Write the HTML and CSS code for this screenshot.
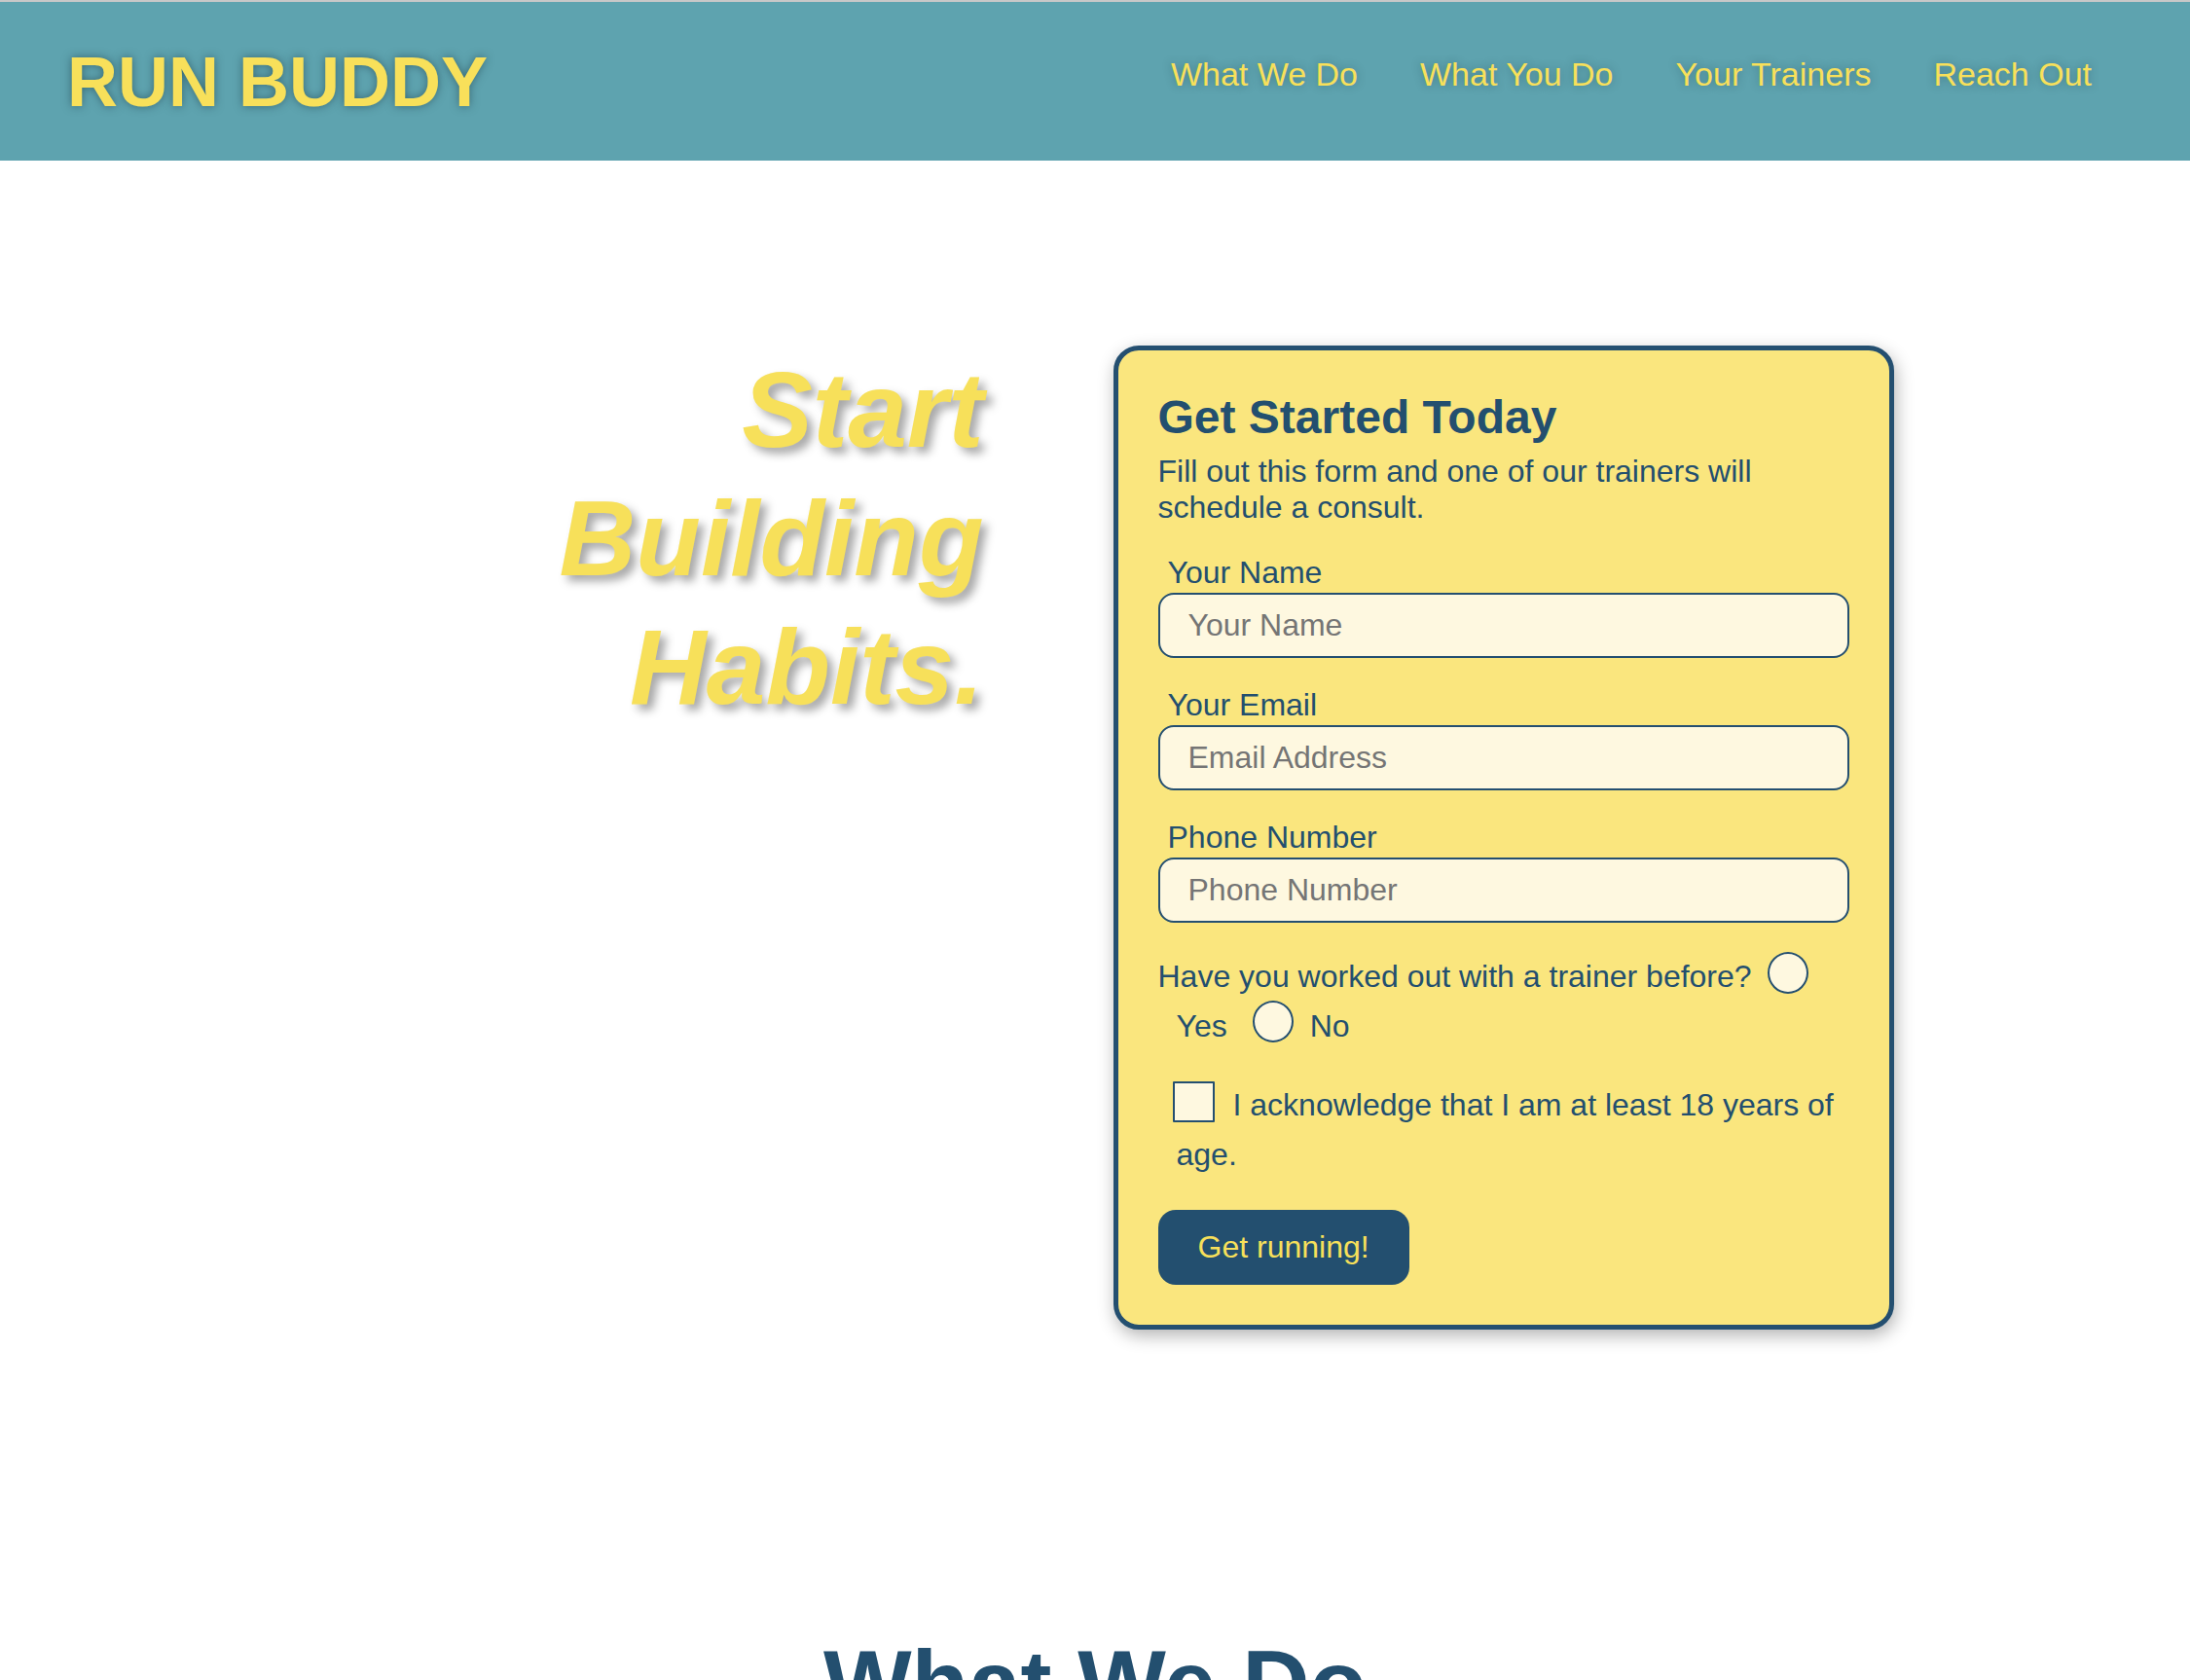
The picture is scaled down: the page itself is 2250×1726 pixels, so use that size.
FILE: index.html
```html
<!DOCTYPE html>
<html lang="en">
<head>
<meta charset="utf-8">
<title>Run Buddy</title>
<link rel="stylesheet" href="styles.css">
</head>
<body>
<header class="site-header">
  <h1 class="logo">RUN BUDDY</h1>
  <nav class="main-nav">
    <a href="#what-we-do">What We Do</a>
    <a href="#what-you-do">What You Do</a>
    <a href="#your-trainers">Your Trainers</a>
    <a href="#reach-out">Reach Out</a>
  </nav>
</header>

<section class="hero">
  <h2 class="hero-cta">
    <span class="hero-line">Start</span>
    <span class="hero-line">Building</span>
    <span class="hero-line">Habits.</span>
  </h2>

  <div class="hero-form">
    <h3 class="form-title">Get Started Today</h3>
    <p class="form-intro">Fill out this form and one of our trainers will schedule a consult.</p>
    <form class="signup">
      <div class="field">
        <label class="field-label" for="name">Your Name</label>
        <input class="text-input" type="text" id="name" placeholder="Your Name">
      </div>
      <div class="field">
        <label class="field-label" for="email">Your Email</label>
        <input class="text-input" type="email" id="email" placeholder="Email Address">
      </div>
      <div class="field">
        <label class="field-label" for="phone">Phone Number</label>
        <input class="text-input" type="tel" id="phone" placeholder="Phone Number">
      </div>
      <div class="radio-group">
        <div class="radio-row">
          <span class="question">Have you worked out with a trainer before?</span>
          <input class="radio q-radio" type="radio" name="trainer" id="trainer-yes">
        </div>
        <div class="radio-row">
          <label class="yes-label" for="trainer-yes">Yes</label>
          <input class="radio mid-radio" type="radio" name="trainer" id="trainer-no">
          <label class="no-label" for="trainer-no">No</label>
        </div>
      </div>
      <p class="ack"><input class="check" type="checkbox" id="age"><label for="age">I acknowledge that I am at least 18 years of age.</label></p>
      <button class="submit" type="submit">Get running!</button>
    </form>
  </div>
</section>

<section class="what-we-do" id="what-we-do">
  <h2 class="section-title">What We Do</h2>
  <p class="section-text">Getting into a workout routine can be hard. We help you find the motivation and the plan to keep moving.</p>
</section>
</body>
</html>
```

FILE: styles.css
```css
* {
  box-sizing: border-box;
}

body {
  margin: 0;
  border-top: 2px solid #c8c8c8;
  font-family: "Liberation Sans", Arial, Helvetica, sans-serif;
  background: #ffffff;
  color: #234f6f;
}

.site-header {
  display: flex;
  align-items: center;
  justify-content: space-between;
  height: 163px;
  padding: 0 101px 0 69px;
  background: #5ea3af;
}

.logo {
  margin: 0;
  font-size: 72px;
  font-weight: 700;
  line-height: normal;
  color: #f8e05a;
  text-shadow: 0 0 10px rgba(25, 55, 65, 0.55);
}

.main-nav {
  display: flex;
  gap: 64px;
  margin-bottom: 15px;
}

.main-nav a {
  font-size: 34px;
  font-weight: 400;
  color: #f8e05a;
  text-decoration: none;
  text-shadow: 0 0 10px rgba(20, 50, 60, 0.35);
}

.hero {
  display: flex;
  justify-content: center;
  align-items: flex-start;
  gap: 133px;
  padding: 190px 4px 190px 0;
}

.hero-cta {
  width: 710px;
  margin: 0;
  font-size: 109px;
  font-weight: 700;
  font-style: italic;
  line-height: 132px;
  text-align: right;
  color: #f7e05a;
  text-shadow: 6px 6px 10px rgba(0, 0, 0, 0.35);
}

.hero-line {
  display: block;
}

.hero-form {
  width: 802px;
  padding: 41px;
  background: #fae67e;
  border: 5px solid #244f70;
  border-radius: 26px;
  box-shadow: 2px 6px 18px rgba(0, 0, 0, 0.3);
}

.form-title {
  margin: 0 0 10px;
  font-size: 48px;
  font-weight: 700;
  line-height: normal;
  color: #234f6f;
}

.form-intro {
  margin: 0 0 30px;
  font-size: 32px;
  line-height: normal;
}

.signup {
  margin: 0;
}

.field {
  margin-bottom: 30px;
}

.field-label {
  display: block;
  margin-left: 10px;
  font-size: 32px;
  line-height: normal;
}

.text-input {
  display: block;
  width: 100%;
  margin-top: 2px;
  padding: 13px 29px;
  font-family: inherit;
  font-size: 32px;
  line-height: normal;
  color: #234f6f;
  background: #fef8e0;
  border: 2px solid #244f70;
  border-radius: 16px;
  outline: none;
}

.text-input::placeholder {
  color: #757575;
  opacity: 1;
}

.radio-group {
  margin-bottom: 30px;
}

.radio-row {
  display: flex;
  align-items: center;
  height: 51px;
  font-size: 32px;
}

.radio {
  appearance: none;
  -webkit-appearance: none;
  width: 42px;
  height: 43px;
  margin: 0 0 8px;
  background: #fef8e0;
  border: 2px solid #244f70;
  border-radius: 50%;
}

.q-radio {
  margin-left: 16px;
}

.yes-label {
  margin-left: 19px;
}

.mid-radio {
  margin-left: 26px;
  margin-bottom: 10px;
}

.no-label {
  margin-left: 17px;
}

.ack {
  margin: 0 0 31px;
  padding-left: 19px;
  font-size: 32px;
  line-height: 51px;
}

.check {
  appearance: none;
  -webkit-appearance: none;
  width: 43px;
  height: 42px;
  margin: 0 19px 0 -4px;
  vertical-align: -7px;
  background: #fef8e0;
  border: 2px solid #244f70;
  border-radius: 1px;
}

.submit {
  padding: 20px 41px;
  font-family: inherit;
  font-size: 32px;
  line-height: normal;
  color: #f8e05a;
  background: #234f6f;
  border: none;
  border-radius: 18px;
  cursor: pointer;
}

.what-we-do {
  padding: 119px 0 120px;
  text-align: center;
}

.section-title {
  margin: 0;
  font-size: 96px;
  font-weight: 700;
  line-height: normal;
  color: #234f6f;
}

.section-text {
  margin: 30px auto 0;
  max-width: 1200px;
  font-size: 32px;
  color: #234f6f;
}
```
